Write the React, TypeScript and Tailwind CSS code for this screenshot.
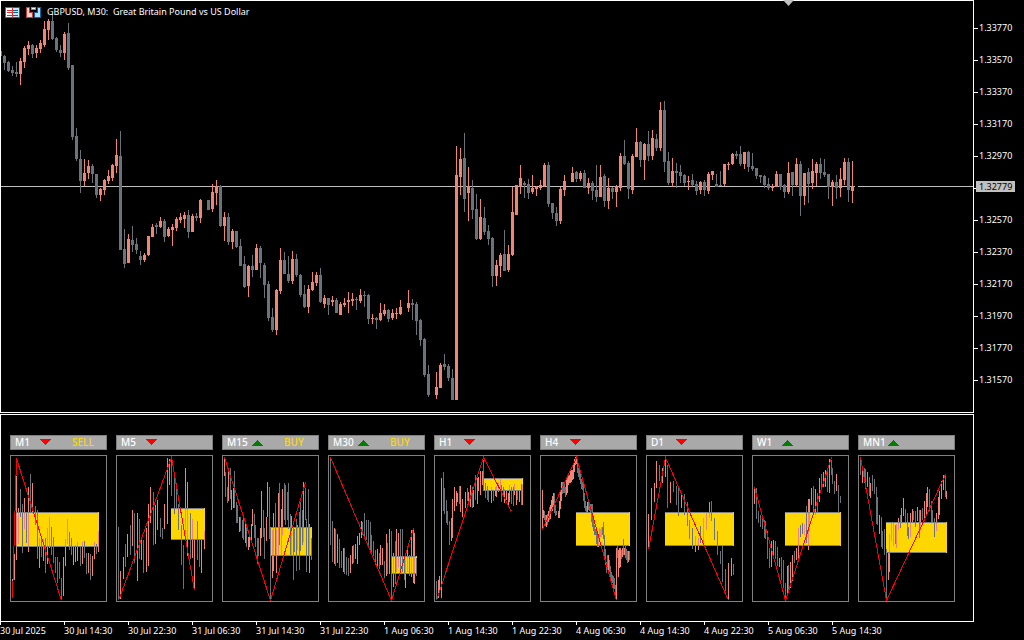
const UP = "#f08575";
const DOWN = "#6a727a";

// One entry per 4px slot: direction (r = up, g = down) then body top, body bottom, high, low. "-" is an empty slot.
const CANDLES = `g51,56,51,56 g56,63,55,70 g62,71,61,72 g70,73,66,76 g72,74,62,77 r61,74,58,85 r48,62,46,68 r45,49,41,55 g45,54,44,58 r48,53,45,58
r43,49,40,53 r29,45,21,47 r21,30,19,40 g21,39,14,40 g38,50,37,52 g50,53,45,57 r34,53,32,60 g33,68,23,70 g65,137,65,140 g136,159,128,161
g159,181,150,193 r173,181,159,186 r166,173,160,179 g166,174,164,183 g174,195,174,198 r189,195,188,201 r180,190,179,195 r176,181,170,184 r165,178,164,181 r155,166,139,173
g156,250,131,250 g249,264,229,268 r239,263,234,263 g240,245,226,252 g244,250,238,254 g256,260,251,265 r255,260,253,262 r236,255,236,256 r227,237,224,237 g225,227,223,234
r221,227,217,228 g221,237,219,242 r229,236,227,237 r227,230,224,246 r219,228,217,231 r217,220,213,223 r215,219,212,228 g215,232,210,238 r216,232,214,232 g216,218,213,221
r200,218,199,223 - g200,210,200,210 r192,209,184,212 r186,193,180,205 g186,226,185,227 r217,226,212,241 g217,242,213,245 r231,242,229,249 g231,247,231,248
g246,266,239,266 g264,287,256,288 r266,286,265,297 g266,270,255,277 r248,270,244,270 g248,263,246,278 g265,285,263,298 g284,318,281,321 g317,330,308,332 r290,330,289,335
r260,291,248,294 g260,274,252,274 g274,281,256,283 r259,281,251,284 g259,275,254,277 g275,295,274,297 g294,307,285,308 r289,307,285,313 r282,290,272,291 r275,283,272,286
g275,302,268,303 r298,304,295,308 g298,305,298,315 r300,302,296,306 g300,313,298,313 r304,315,302,315 r303,305,298,307 r300,302,292,313 r299,301,293,306 g299,300,297,310
r295,301,289,303 g295,296,291,307 g295,319,294,324 r318,319,314,324 g318,320,317,329 r313,320,303,321 r310,314,304,316 g310,319,309,322 r313,318,309,320 r313,314,308,319
r307,314,300,315 - r303,308,290,312 g303,305,299,320 g304,321,302,335 g320,340,319,346 g339,375,338,377 g374,395,365,397 - r387,395,372,399
r365,388,363,388 g364,367,354,370 g366,378,364,381 g378,400,369,400 r175,400,146,400 r159,177,148,195 g158,199,133,212 r186,193,167,221 g188,210,180,219 g209,239,194,240
r217,239,199,240 g218,232,207,235 g231,239,225,245 g238,276,237,287 r265,276,260,286 r255,266,253,277 g254,271,230,271 r254,270,245,272 r212,255,187,256 r185,215,185,215
r178,187,165,194 g183,185,181,198 g184,193,179,199 r188,192,175,194 r187,189,186,196 r185,188,180,190 r165,186,163,187 g165,204,162,207 g203,213,203,219 g213,221,207,226
r189,221,187,224 r181,190,175,196 - r173,182,167,182 g172,179,171,182 r173,179,171,181 g173,188,170,188 r183,188,178,194 g183,191,181,200 g190,197,165,202
r177,197,165,197 g176,201,174,207 r188,201,178,209 g188,192,187,199 r186,192,185,207 r156,188,153,191 g156,164,140,165 g163,189,161,199 r156,190,154,194 r142,157,128,157
g142,160,141,167 r144,160,143,180 g144,156,131,161 r138,156,130,160 g139,148,134,151 r110,148,102,151 g110,162,101,172 g161,183,152,185 r171,183,158,187 g171,173,163,188
g172,176,165,183 g175,183,174,186 r181,182,176,190 g180,185,174,186 g184,191,181,195 r182,190,181,194 g182,190,180,196 r174,191,172,194 r171,175,171,180 g184,187,174,187
g185,186,171,186 r164,184,164,186 r164,165,162,170 r154,164,153,165 g154,156,151,159 g154,164,146,166 r152,164,152,169 g152,167,151,172 g166,169,153,171 g168,176,168,179
g175,177,175,183 g176,185,175,188 g184,188,178,190 r186,188,184,191 r174,187,171,187 g174,187,174,190 g185,192,184,198 r173,192,162,194 g172,185,172,196 r164,185,158,187
g164,196,161,216 r173,196,173,205 g172,184,168,203 r171,183,159,189 r164,173,162,186 g164,173,158,179 g172,175,159,177 g174,187,174,199 r182,187,180,206 g182,188,175,199
r179,188,168,197 r162,180,158,185 g162,190,158,202 r186,191,161,203`.split(/\s+/);

type Panel = {
  name: string;
  trend: "up" | "down";
  signal?: "BUY" | "SELL";
  zone: [number, number, number, number];
  swing: string;
  // direction, x, high, low
  bars: string;
};

const PANELS: Panel[] = [
  {
    name: "M1", trend: "down", signal: "SELL", zone: [6, 57, 89, 92],
    swing: "2,143 6,3 51,145",
    bars: "r2,124,143 r4,99,125 r6,21,105 r8,53,89 g10,34,62 g12,49,98 r14,43,74 g16,57,88 r18,32,97 g20,19,57 r22,28,58 g25,51,70 g27,55,104 r29,83,113 g31,84,102 r33,84,106 g35,83,118 r37,73,109 r39,62,93 g41,72,100 g43,82,108 g45,102,118 g47,102,128 g49,107,124 g51,123,145 r53,102,141 r55,84,111 r57,64,89 g59,77,95 g61,83,100 r63,92,110 r65,90,107 r67,87,106 g70,92,111 r72,87,109 g74,86,103 g76,98,119 r78,98,118 g80,99,125 r82,101,121 r84,87,104 g86,89,99 r88,76,97",
  },
  {
    name: "M5", trend: "down", zone: [55, 53, 89, 85],
    swing: "2,145 55,2 78,135",
    bars: "g2,72,145 r4,116,144 r7,102,124 g9,89,112 r11,79,102 g14,70,100 r16,55,91 g18,58,108 r21,58,126 g23,64,104 r25,83,105 g27,85,118 r30,73,117 r32,49,111 r34,32,68 g37,37,90 r39,50,89 r41,45,75 g44,63,82 g46,73,84 r48,49,74 r51,3,69 r53,4,30 g55,4,41 g58,23,59 g60,28,53 g62,49,75 g65,70,110 g67,90,134 r69,13,85 r71,27,101 g74,58,104 r76,64,103 r78,84,133 g81,66,105 g83,84,112 r85,84,118 r88,76,94",
  },
  {
    name: "M15", trend: "up", signal: "BUY", zone: [48, 72, 90, 101],
    swing: "2,2 48,145 83,27",
    bars: "r2,3,21 g3,17,42 g5,32,48 r6,17,46 g8,13,44 r9,35,55 r11,33,53 g12,16,53 g14,47,68 g15,50,68 r17,62,77 g18,62,76 g20,65,83 g21,62,85 r23,67,88 g24,70,92 r26,82,95 r27,82,92 r29,69,88 r30,54,71 g32,59,83 g33,70,92 g35,83,109 g36,83,101 r38,73,101 r39,36,83 g41,55,82 g42,73,104 r44,62,86 r45,27,62 g47,32,84 g48,72,145 r50,75,123 r51,58,116 g53,48,100 r54,74,118 r56,38,100 g57,28,90 r59,54,100 r60,34,80 g62,28,65 g63,30,70 g65,37,65 g66,28,74 g68,59,100 r69,61,100 g71,73,125 g72,74,97 g74,64,116 r75,70,95 g77,57,115 g78,47,96 g80,55,90 r81,27,87 g83,33,65 g84,64,117 g86,34,100 r87,69,118 g89,83,105",
  },
  {
    name: "M30", trend: "up", signal: "BUY", zone: [63, 101, 89, 119],
    swing: "2,2 63,145 85,73",
    bars: "g2,3,90 g4,66,107 r6,73,109 g7,74,111 r9,79,108 g11,84,113 g13,96,113 r15,93,117 g16,93,119 g18,102,120 g20,103,121 r22,100,118 r24,91,109 g25,90,108 r27,89,104 r29,81,109 r31,78,90 r33,66,83 g34,67,80 g36,58,83 g38,65,85 g40,65,90 g42,67,95 g43,80,97 g45,86,101 g47,95,110 r49,94,114 g51,98,114 r52,90,110 r54,93,110 g56,106,123 r58,79,121 g59,88,119 r61,74,119 g63,76,145 r65,98,132 g67,86,129 r68,74,117 r70,78,112 g72,74,118 g74,74,117 g76,101,125 r77,105,133 r79,94,117 g81,100,121 r83,75,122 r85,74,128 r86,78,129 g88,103,121",
  },
  {
    name: "H1", trend: "down", zone: [49, 23, 89, 36],
    swing: "2,145 49,2 77,56",
    bars: "g2,126,145 r4,125,143 r5,121,137 r7,23,143 g9,17,56 g10,33,59 g12,45,68 g13,56,70 g15,66,90 r17,63,86 r18,44,83 r20,32,56 r22,36,51 r23,38,47 g25,31,49 r26,31,57 r28,44,62 r31,37,53 g33,33,46 r34,37,50 r36,30,52 g38,32,53 r39,35,52 g41,20,45 r43,23,49 r44,22,36 r46,16,40 r48,16,30 g49,5,36 g51,28,43 g53,31,45 g54,35,47 r57,32,48 g59,36,46 r61,32,41 r62,31,42 r64,28,37 r66,24,36 g67,30,47 g69,32,40 r70,34,48 r72,36,45 r74,38,50 r75,30,47 g77,32,49 g79,32,51 r80,29,40 r82,35,50 g83,36,45 r85,35,47 g87,29,50 r88,30,50",
  },
  {
    name: "H4", trend: "down", zone: [36, 57, 90, 91],
    swing: "2,74 36,2 76,145",
    bars: "r2,35,74 r3,55,63 g4,56,65 g5,60,71 r6,60,72 g7,59,70 r8,56,67 g9,52,65 r10,50,64 r11,45,56 r12,41,56 r13,38,52 g14,38,58 g15,50,61 g16,56,60 r18,56,63 r19,46,63 r20,35,54 r21,27,46 g22,27,39 g23,27,38 g24,29,38 g25,32,42 r26,25,40 r27,23,38 r28,19,30 r29,20,28 r30,15,28 r31,15,27 r32,15,25 r33,9,24 r34,4,17 r35,2,10 r36,2,9 g37,5,18 g38,13,22 g39,13,25 g40,19,29 g41,24,34 g42,27,35 g43,27,46 g44,38,53 g45,46,56 g46,51,58 r47,47,57 g48,46,55 g49,47,56 g50,49,58 g51,49,67 g52,49,72 g53,65,76 g54,70,80 g55,74,80 g56,74,89 g57,79,92 r58,80,92 r59,73,86 r60,74,82 r61,72,82 g62,72,80 g63,67,84 g64,80,102 g65,94,110 g66,107,118 g67,100,114 r68,100,115 g69,105,117 g70,111,123 g71,117,130 g72,120,128 g73,121,134 g74,123,134 g75,130,140 r76,93,144 g77,91,103 r78,95,122 r79,93,113 r80,93,112 g81,95,104 r82,93,102 g83,84,100 r84,93,100 g85,90,103 g86,94,105 g87,96,108 r88,96,107 g89,96,105",
  },
  {
    name: "D1", trend: "down", zone: [19, 57, 88, 91],
    swing: "2,94 19,2 82,145",
    bars: "r2,59,94 r5,33,65 r8,28,47 r10,6,33 g13,10,26 r16,13,28 r19,5,22 g21,10,53 r24,27,48 g27,26,37 g30,31,50 g32,33,61 r35,40,53 g38,39,60 g41,47,71 g43,65,84 g46,73,94 r49,81,97 r52,83,95 g54,71,88 r57,63,90 r60,58,75 r63,47,63 g65,46,66 g68,63,85 g71,76,100 g74,96,109 g76,91,127 g79,114,136 r82,108,144 r85,103,121 g87,109,120",
  },
  {
    name: "W1", trend: "up", zone: [33, 57, 89, 91],
    swing: "2,32 33,145 79,2",
    bars: "r2,33,49 g4,33,64 g6,56,68 g8,60,72 g10,64,74 g12,65,83 g13,66,84 g15,76,104 g17,93,113 r19,86,112 r21,85,104 g23,86,104 g25,92,111 r27,103,112 g29,102,125 g31,105,133 g33,128,143 r35,111,141 g36,110,135 r38,107,133 r40,100,126 g42,96,108 r44,93,105 r46,73,103 g48,70,82 g50,68,79 r52,69,80 g54,51,88 r56,44,95 r57,44,74 r59,33,50 g61,31,57 r63,34,60 g65,38,57 r67,23,47 g69,19,32 r71,17,32 r73,15,32 g75,13,37 r77,4,38 g79,5,20 g80,13,29 g82,26,39 r84,19,36 g86,30,57 g88,41,48",
  },
  {
    name: "MN1", trend: "up", zone: [28, 67, 89, 98],
    swing: "2,2 28,145 87,19",
    bars: "g2,5,20 r4,16,28 g6,13,28 g7,14,34 r9,17,32 g11,22,41 r12,28,43 g14,20,36 g16,24,39 g18,32,69 g19,42,70 r21,60,79 g23,62,92 g24,76,94 g26,74,100 g28,94,145 r30,98,125 r31,79,117 r33,68,86 r35,68,91 g37,70,89 r38,69,93 r40,63,75 g42,60,73 r43,53,68 r45,43,61 g47,54,67 g49,58,81 g50,72,84 r52,58,82 r54,54,68 g55,56,65 g57,56,72 r59,52,66 g61,55,83 r62,55,76 g64,53,65 r66,46,63 r68,38,59 r69,32,52 g71,34,56 g73,46,67 g74,55,67 g76,63,82 r78,58,76 r80,42,64 r81,36,60 r83,26,44 r85,20,35 g87,19,42 r88,36,44",
  },
];

const PRICES = ["1.33770", "1.33570", "1.33370", "1.33170", "1.32970", "", "1.32570", "1.32370", "1.32170", "1.31970", "1.31770", "1.31570"];

const TIMES = ["30 Jul 2025", "30 Jul 14:30", "30 Jul 22:30", "31 Jul 06:30", "31 Jul 14:30", "31 Jul 22:30", "1 Aug 06:30", "1 Aug 14:30", "1 Aug 22:30", "4 Aug 06:30", "4 Aug 14:30", "4 Aug 22:30", "5 Aug 06:30", "5 Aug 14:30"];

const color = (s: string) => (s[0] === "r" ? UP : DOWN);
const nums = (s: string) => s.slice(1).split(",").map(Number);

function CandleChart() {
  return (
    <svg className="block h-[411px] w-full" shapeRendering="crispEdges" role="img" aria-label="GBPUSD M30 candles">
      <g transform="translate(-1 -1)">
        <rect x="0" y="186" width="855" height="1" fill="#c0c0c0" />
        <rect x="858" y="186" width="100%" height="1" fill="#c0c0c0" />
        {CANDLES.map((c, i) => {
          if (c === "-") return null;
          const [top, bottom, high, low] = nums(c);
          return (
            <g key={i} fill={color(c)}>
              <rect x={i * 4} y={high} width="1" height={low - high} />
              <rect x={i * 4 - 1} y={top} width="3" height={bottom - top} />
            </g>
          );
        })}
      </g>
    </svg>
  );
}

function TableIcon() {
  return (
    <svg width="15" height="11" viewBox="0 0 15 11" shapeRendering="crispEdges" aria-hidden="true">
      <rect width="8" height="11" fill="#e03030" />
      <rect x="8" width="7" height="11" fill="#0a64ad" />
      <path d="M1 1h6v9H1z" fill="#fff" />
      <path d="M8 1h6v9H8z" fill="#c4e6ff" />
      <path d="M2 3h5v1H2zM2 5h5v1H2zM2 8h5v1H2z" fill="#e03030" />
      <path d="M8 3h5v1H8zM8 5h5v1H8zM8 8h5v1H8z" fill="#0a64ad" />
    </svg>
  );
}

function TradeIcon() {
  return (
    <svg width="15" height="11" viewBox="0 0 15 11" shapeRendering="crispEdges" aria-hidden="true">
      <path d="M0 0h4v5h3v6H0z" fill="#e03030" />
      <path d="M1 1h2v5h3v4H1z" fill="#ffd8d4" />
      <path d="M11 0h4v11H8V5h3z" fill="#0a64ad" />
      <path d="M12 1h2v9H9V6h3z" fill="#b4e0ff" />
      <path d="M5 0h5v3H5z" fill="#909090" />
      <path d="M6 1h3v1H6z" fill="#fff" />
    </svg>
  );
}

function TimeframePanel({ panel }: { panel: Panel }) {
  const [x1, y1, x2, y2] = panel.zone;
  return (
    <article className="flex w-[97px] flex-col gap-[5px]">
      <header className="flex h-[15px] items-center border border-[#808080] bg-[#a9a9a9] pl-1 text-[10px] leading-[13px] font-medium text-white">
        <h2 className="w-[25px] whitespace-nowrap">{panel.name}</h2>
        <svg width="11" height="8" viewBox="0 0 11 8" shapeRendering="crispEdges" aria-label={panel.trend}>
          {panel.trend === "down" ? <path d="M0 0h11L5.500 6z" fill="#f00" /> : <path d="M0 7h11L5.500 1z" fill="#008000" />}
        </svg>
        <span className="pl-[21px] text-[#ffd700]">{panel.signal}</span>
      </header>
      <div className="border border-[#808080]">
        <svg className="block h-[145px] w-full" shapeRendering="crispEdges" role="img" aria-label={panel.name + " swings"}>
          <g transform="translate(-1 -1)">
            <rect x={x1} y={y1} width={x2 - x1} height={y2 - y1} fill="#ffd700" />
            {panel.bars.split(" ").map((b, i) => {
              const [x, high, low] = nums(b);
              return <rect key={i} x={x} y={high} width="1" height={low - high} fill={color(b)} />;
            })}
            <rect x={x1} y={y1} width={x2 - x1 - 1} height="1" fill="#808080" />
            <rect x={x1} y={y2 - 1} width={x2 - x1 - 1} height="1" fill="#808080" />
            <polyline points={panel.swing} transform="translate(0.5 0.5)" fill="none" stroke="#f00" strokeWidth="1" />
          </g>
        </svg>
      </div>
    </article>
  );
}

export default function App() {
  return (
    <main className="flex min-h-screen flex-col overflow-hidden bg-black font-['Noto_Sans',sans-serif] text-[9px] leading-3 text-white">
      <section className="flex">
        <div className="relative min-w-0 flex-1 border border-white">
          <CandleChart />
          <div className="absolute top-[5px] left-1 flex items-center">
            <button type="button" aria-label="Market depth" className="mr-[6px]">
              <TableIcon />
            </button>
            <button type="button" aria-label="One-click trading" className="mr-[6px]">
              <TradeIcon />
            </button>
            <h1 className="whitespace-pre">GBPUSD, M30:  Great Britain Pound vs US Dollar</h1>
          </div>
          <svg className="absolute -top-px left-[782px]" width="11" height="6" viewBox="0 0 11 6" aria-hidden="true">
            <path d="M0 0h11L5.500 6z" fill="#c0c0c0" />
          </svg>
        </div>
        <div className="relative w-[50px] pt-3">
          {PRICES.map((p, i) => (
            <div key={i} className="flex h-8 items-center gap-px">
              <span className="h-px w-1 bg-white" />
              <span>{p}</span>
            </div>
          ))}
          <div className="absolute top-[181px] left-[2px] h-[11px] w-[39px] bg-[#c0c0c0] pl-[3px] leading-[11px] text-black">1.32779</div>
        </div>
      </section>
      <section className="mt-px mr-[50px] flex h-[208px] gap-[9px] border border-white pt-5 pl-[9px]">
        {PANELS.map((p) => (
          <TimeframePanel key={p.name} panel={p} />
        ))}
      </section>
      <footer className="flex">
        {TIMES.map((t) => (
          <div key={t} className="w-16 shrink-0 whitespace-nowrap">
            <div className="h-[3px] w-px bg-white" />
            <time>{t}</time>
          </div>
        ))}
      </footer>
    </main>
  );
}
